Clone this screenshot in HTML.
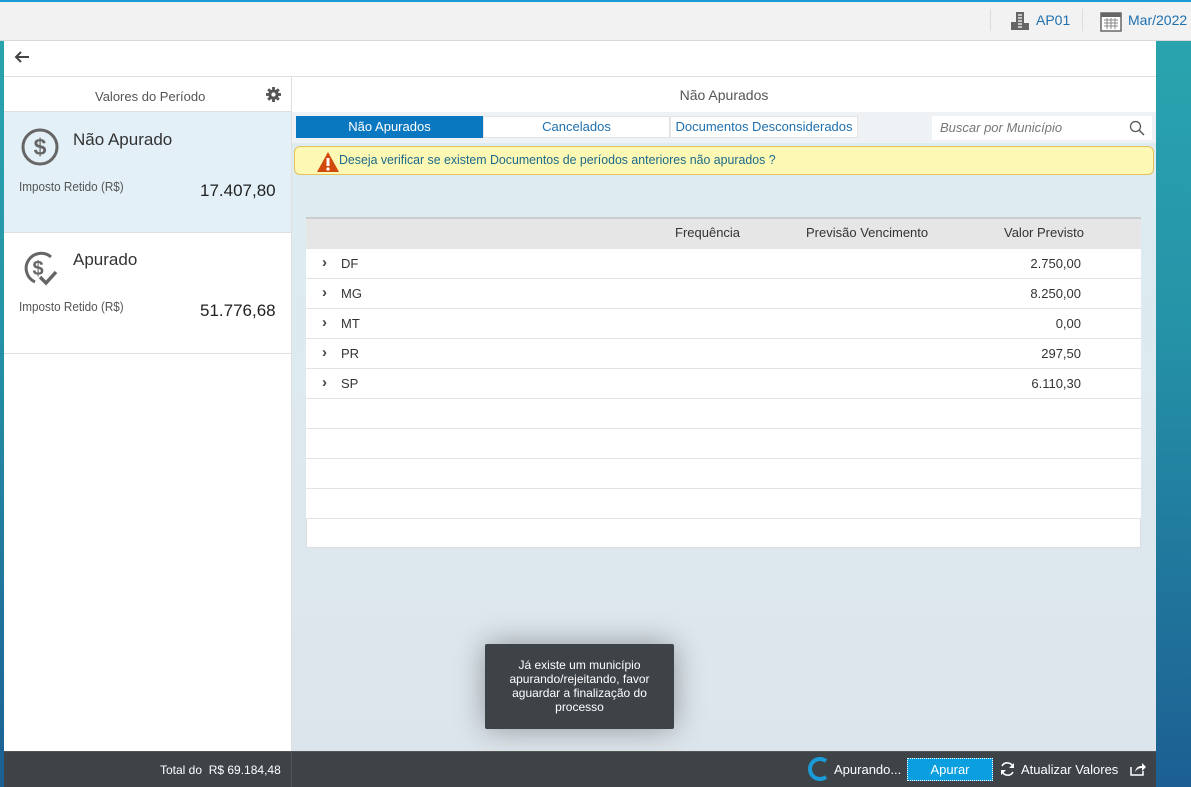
<!DOCTYPE html>
<html><head><meta charset="utf-8"><style>
*{box-sizing:border-box;margin:0;padding:0}
body{width:1191px;height:787px;overflow:hidden;position:relative;font-family:"Liberation Sans",Arial,sans-serif;font-size:13px;color:#333;background:linear-gradient(180deg,#2aa7b0 0%,#2594a8 40%,#1c5f93 100%)}
.abs{position:absolute}
.top{left:0;top:0;width:1191px;height:41px;background:#f2f2f2;border-top:2px solid #1a9bd7;border-bottom:1px solid #d9d9d9}
.panel{left:4px;top:41px;width:1152px;height:746px;background:#fff}
.blue{color:#1f6fae}
.row{left:306px;width:835px;height:30px;border-bottom:1px solid #e3e3e3;background:#fff}
.row span{position:absolute;top:7px}
.row span.ch{font-weight:bold;color:#444;font-size:15px;top:5px;left:16px}
.cond{display:inline-block;transform:scaleX(.9);transform-origin:left}
</style></head><body>
<div class="abs top">
  <div class="abs" style="left:990px;top:7px;width:1px;height:22px;background:#ddd"></div>
  <div class="abs" style="left:1082px;top:7px;width:1px;height:22px;background:#ddd"></div>
  <svg class="abs" style="left:1009px;top:8px" width="22" height="22" viewBox="0 0 22 22"><path d="M7 2h8v18H7z M2 12h5v8H2z M15 13h5v7h-5z" fill="#666"/><path d="M9 5h4M9 8h4M9 11h4M9 14h4M9 17h4" stroke="#fff" stroke-width="1.2"/></svg>
  <div class="abs blue" style="left:1036px;top:10px;font-size:14px">AP01</div>
  <svg class="abs" style="left:1100px;top:8px" width="22" height="22" viewBox="0 0 22 22"><rect x="1" y="3" width="20" height="18" fill="#fff" stroke="#666" stroke-width="1.5"/><rect x="1" y="3" width="20" height="4" fill="#666"/><path d="M4 10h14M4 13h14M4 16h14M7 8v11M11 8v11M15 8v11" stroke="#888" stroke-width="1"/></svg>
  <div class="abs blue" style="left:1128px;top:10px;font-size:14px">Mar/2022</div>
</div>
<div class="abs panel"></div>
<svg class="abs" style="left:14px;top:51px" width="16" height="12" viewBox="0 0 16 12"><path d="M15 6H3M7 1L2 6l5 5" fill="none" stroke="#444" stroke-width="2"/></svg>
<div class="abs" style="left:4px;top:76px;width:1152px;height:1px;background:#e0e0e0"></div>
<div class="abs" style="left:291px;top:77px;width:1px;height:674px;background:#e0e0e0"></div>
<div class="abs" style="left:4px;top:111px;width:287px;height:1px;background:#e0e0e0"></div>
<div class="abs" style="left:95px;top:89px;font-size:13px;color:#555">Valores do Período</div>
<svg class="abs" style="left:266px;top:87px" width="15" height="15" viewBox="0 0 16 16"><g fill="#555"><circle cx="8" cy="8" r="5.5"/><rect x="6.5" y="0" width="3" height="16"/><rect x="0" y="6.5" width="16" height="3"/><rect x="6.5" y="0" width="3" height="16" transform="rotate(45 8 8)"/><rect x="6.5" y="0" width="3" height="16" transform="rotate(-45 8 8)"/></g><circle cx="8" cy="8" r="2.3" fill="#fff"/></svg>
<div class="abs" style="left:4px;top:112px;width:287px;height:121px;background:#e3f0f8;border-bottom:1px solid #e0e0e0"></div>
<svg class="abs" style="left:21px;top:128px" width="40" height="40" viewBox="0 0 40 40"><circle cx="19" cy="19" r="17" fill="none" stroke="#666" stroke-width="3"/><text x="19" y="27" text-anchor="middle" font-family="Liberation Sans" font-weight="bold" font-size="23" fill="#666">$</text></svg>
<div class="abs" style="left:73px;top:130px;font-size:17px;color:#333">Não Apurado</div>
<div class="abs" style="left:19px;top:179px;font-size:13px;color:#555"><span class="cond">Imposto Retido (R$)</span></div>
<div class="abs" style="left:200px;top:181px;font-size:17px;color:#222">17.407,80</div>
<div class="abs" style="left:4px;top:353px;width:287px;height:1px;background:#e0e0e0"></div>
<svg class="abs" style="left:21px;top:249px" width="40" height="40" viewBox="0 0 40 40"><path d="M30 8A15 15 0 1 0 14 33" fill="none" stroke="#666" stroke-width="3"/><text x="17" y="26" text-anchor="middle" font-family="Liberation Sans" font-weight="bold" font-size="20" fill="#666">$</text><path d="M19 28l6 6 10-11" fill="none" stroke="#666" stroke-width="3.5"/></svg>
<div class="abs" style="left:73px;top:250px;font-size:17px;color:#333">Apurado</div>
<div class="abs" style="left:19px;top:299px;font-size:13px;color:#555"><span class="cond">Imposto Retido (R$)</span></div>
<div class="abs" style="left:200px;top:301px;font-size:17px;color:#222">51.776,68</div>
<!-- right -->
<div class="abs" style="left:292px;top:87px;width:864px;text-align:center;font-size:14px;color:#555">Não Apurados</div>
<div class="abs" style="left:292px;top:112px;width:864px;height:639px;background:linear-gradient(180deg,#dcedf1 0%,#dde9ef 50%,#dde5ec 100%);border-top:1px solid #e0e0e0"></div>
<div class="abs" style="left:292px;top:112px;width:864px;height:31px;background:#eef2f4"></div>
<div class="abs" style="left:296px;top:116px;width:187px;height:22px;background:#0a78c0;color:#fff;text-align:center;line-height:22px">Não Apurados</div>
<div class="abs blue" style="left:483px;top:116px;width:187px;height:22px;background:#fff;border:1px solid #e4e4e4;text-align:center;line-height:20px">Cancelados</div>
<div class="abs blue" style="left:670px;top:116px;width:188px;height:22px;background:#fff;border:1px solid #e4e4e4;text-align:center;line-height:20px">Documentos Desconsiderados</div>
<div class="abs" style="left:932px;top:116px;width:220px;height:24px;background:#fff"></div>
<div class="abs" style="left:940px;top:120px;font-style:italic;color:#777">Buscar por Município</div>
<svg class="abs" style="left:1129px;top:120px" width="16" height="16" viewBox="0 0 16 16"><circle cx="6.5" cy="6.5" r="5" fill="none" stroke="#555" stroke-width="1.3"/><path d="M10 10l5 5" stroke="#555" stroke-width="1.5"/></svg>
<div class="abs" style="left:294px;top:146px;width:860px;height:29px;background:#fdf8b4;border:1px solid #e6c15a;border-radius:6px"></div>
<svg class="abs" style="left:316px;top:151px" width="24" height="22" viewBox="0 0 24 22"><path d="M12 1L23 21H1z" fill="#d24a0a"/><path d="M12 7v8" stroke="#fff" stroke-width="3"/><circle cx="12" cy="18" r="1.6" fill="#fff"/></svg>
<div class="abs" style="left:339px;top:152px;color:#1b6a8a"><span class="cond" style="transform:scaleX(.95)">Deseja verificar se existem Documentos de períodos anteriores não apurados ?</span></div>
<div class="abs" style="left:306px;top:217px;width:835px;height:331px;background:#fff;border:1px solid #ddd"></div>
<div class="abs" style="left:306px;top:217px;width:835px;height:32px;background:#e6e6e6;border-top:2px solid #ccc"></div>
<div class="abs" style="left:675px;top:225px">Frequência</div>
<div class="abs" style="left:806px;top:225px">Previsão Vencimento</div>
<div class="abs" style="left:1004px;top:225px">Valor Previsto</div>
<div class="abs row" style="top:249px"><span class="ch">&#8250;</span><span style="left:35px">DF</span><span style="right:60px">2.750,00</span></div>
<div class="abs row" style="top:279px"><span class="ch">&#8250;</span><span style="left:35px">MG</span><span style="right:60px">8.250,00</span></div>
<div class="abs row" style="top:309px"><span class="ch">&#8250;</span><span style="left:35px">MT</span><span style="right:60px">0,00</span></div>
<div class="abs row" style="top:339px"><span class="ch">&#8250;</span><span style="left:35px">PR</span><span style="right:60px">297,50</span></div>
<div class="abs row" style="top:369px"><span class="ch">&#8250;</span><span style="left:35px">SP</span><span style="right:60px">6.110,30</span></div>
<div class="abs row" style="top:399px"></div>
<div class="abs row" style="top:429px"></div>
<div class="abs row" style="top:459px"></div>
<div class="abs row" style="top:489px"></div>
<div class="abs" style="left:485px;top:644px;width:189px;height:85px;background:#3d4347;border-radius:2px;box-shadow:0 0 30px rgba(0,0,0,.35);color:#fff;font-size:12px;text-align:center;padding-top:14px;line-height:14px">Já existe um município<br>apurando/rejeitando, favor<br>aguardar a finalização do<br>processo</div>
<!-- footer -->
<div class="abs" style="left:4px;top:751px;width:1152px;height:36px;background:#3d4347;border-top:1px solid #555"></div>
<div class="abs" style="left:291px;top:751px;width:1px;height:36px;background:#555"></div>
<div class="abs" style="left:160px;top:763px;color:#fff;font-size:12px">Total do&nbsp; R$ 69.184,48</div>
<svg class="abs" style="left:806px;top:756px" width="26" height="26" viewBox="0 0 26 26"><path d="M20 5A10 10 0 1 0 20 21" fill="none" stroke="#1a9bd7" stroke-width="4"/></svg>
<div class="abs" style="left:834px;top:762px;color:#fff;font-size:13px">Apurando...</div>
<div class="abs" style="left:907px;top:758px;width:86px;height:23px;background:#0b9fe0;border:1px dotted #fff;color:#fff;text-align:center;line-height:21px">Apurar</div>
<svg class="abs" style="left:999px;top:761px" width="17" height="16" viewBox="0 0 17 16"><path d="M14 6A6 6 0 0 0 3 5M3 10a6 6 0 0 0 11 1" fill="none" stroke="#fff" stroke-width="1.6"/><path d="M15 2v5h-5zM2 14V9h5z" fill="#fff"/></svg>
<div class="abs" style="left:1021px;top:762px;color:#fff;font-size:13px">Atualizar Valores</div>
<svg class="abs" style="left:1130px;top:762px" width="16" height="14" viewBox="0 0 16 14"><path d="M1 5v8h12v-4" fill="none" stroke="#fff" stroke-width="1.5"/><path d="M5 10c1-5 4-6 7-6V1l4 4-4 4V6c-3 0-5 1-7 4z" fill="#fff"/></svg>
</body></html>
